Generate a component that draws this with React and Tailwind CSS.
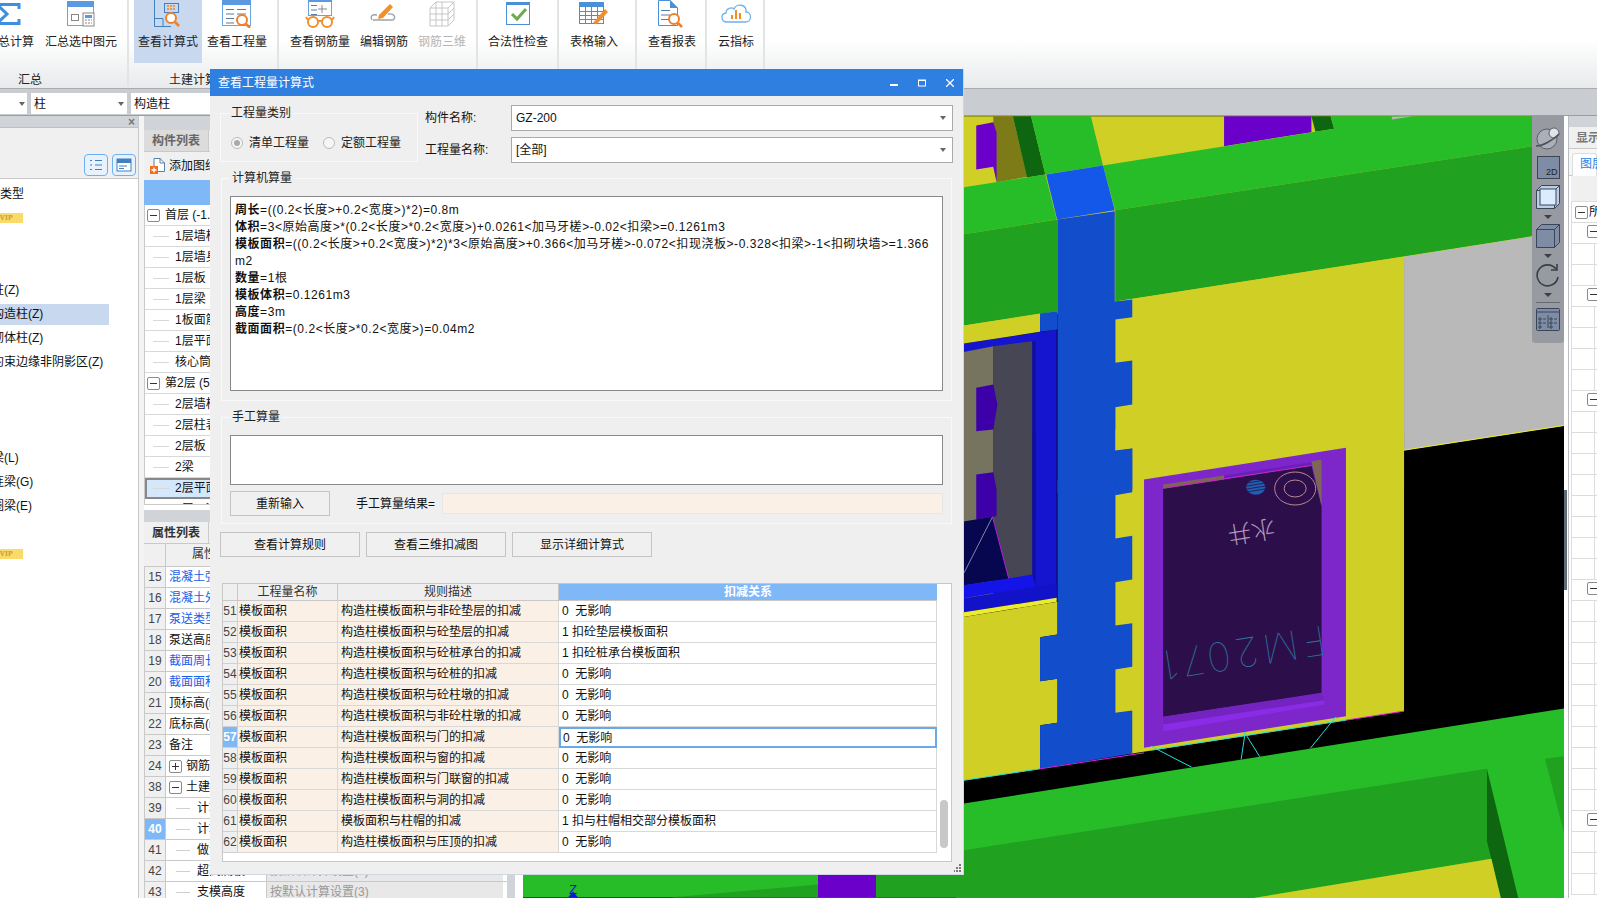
import React from 'react';

const z7 = (p) => p.map(([x, y]) => `${960 + x / 2.4615},${90 + y / 3}`).join(' ');
const z8 = (p) => p.map(([x, y]) => `${960 + x / 2.4615},${430 + y / 3}`).join(' ');
const GREEN = '#26bd28', DGREEN = '#21a120', XGREEN = '#0f6610', YEL = '#cfcf26', PUR = '#6a00c9', BLUE = '#124dcc', FRAME = '#7d26c9';

function Canvas() {
  return (
    <svg viewBox="523 117 1041 781" className="block w-full h-full bg-black">
      {/* upper */}
      <polygon points={z7([[-10, 80], [1490, 80], [1490, 440], [-10, 720]])} fill={YEL} />
      <polygon points={z7([[82, 80], [130, 80], [165, 262], [90, 278], [82, 230]])} fill="#7d7a18" />
      <polygon points={z7([[40, 108], [82, 98], [90, 130], [90, 275], [82, 232], [40, 240]])} fill={PUR} />
      <polygon points={z7([[130, 80], [175, 80], [210, 255], [165, 264]])} fill={XGREEN} />
      <polygon points={z7([[175, 80], [322, 80], [352, 228], [210, 255]])} fill={GREEN} />
      <polygon points={z7([[650, 80], [865, 80], [865, 128], [650, 170]])} fill={PUR} />
      <polygon points={z7([[865, 80], [912, 80], [921, 118], [875, 127]])} fill={XGREEN} />
      <polygon points={z7([[352, 228], [921, 118], [912, 80], [1490, 80], [1490, 155], [382, 362]])} fill={GREEN} />
      <polygon points={z7([[1063, 90], [1115, 80], [1063, 82]])} fill="#b9b9b9" />
      <polygon points={z7([[-10, 297], [210, 255], [238, 390], [-10, 438]])} fill={GREEN} />
      <polygon points={z7([[212, 255], [352, 228], [381, 362], [239, 390]])} fill="#1458ea" />
      <polygon points={z7([[-10, 438], [240, 390], [240, 665], [-10, 712]])} fill={DGREEN} />
      <polygon points={z7([[382, 362], [1490, 155], [1490, 425], [382, 636]])} fill={DGREEN} />
      {/* gray wall */}
      <polygon points={z7([[1093, 502], [1490, 425], [1490, 1008], [1093, 1082]])} fill="#b9b9b9" />
      <line x1={960 + 1093 / 2.4615} y1={90 + 1082 / 3} x2={1564} y2={90 + 1008 / 3} stroke="#f0f020" strokeWidth="1" />
      {/* yellow wall */}
      <polygon points={z7([[382, 636], [1093, 502], [1093, 1200], [382, 1200]])} fill={YEL} />
      <polygon points={z8([[382, 0], [1093, 0], [1093, 845], [424, 972], [382, 972]])} fill={YEL} />
      {/* left window */}
      <polygon points={z7([[-10, 766], [238, 720], [238, 1530], [-10, 1530]])} fill="#1515d0" />
      <polygon points={z7([[-10, 792], [82, 770], [82, 1530], [-10, 1530]])} fill="#76735f" />
      <polygon points={z7([[82, 770], [178, 755], [178, 1300], [82, 1300]])} fill="#464654" />
      <polygon points={z7([[178, 755], [186, 754], [186, 1300], [178, 1300]])} fill="#0f0f9a" />
      <polygon points={z8([[82, 0], [178, 0], [178, 435], [120, 447], [82, 262]])} fill="#464654" />
      <polygon points={z8([[178, 0], [186, 0], [186, 470], [178, 435]])} fill="#0f0f9a" />
      <polygon points={z7([[40, 895], [82, 885], [92, 945], [82, 1020], [40, 1025]])} fill="#3d00a8" />
      <polygon points={z8([[40, 135], [82, 128], [90, 180], [90, 260], [40, 270]])} fill="#3d00a8" />
      <polygon points={z8([[-10, 280], [80, 262], [120, 447], [-10, 472]])} fill="#07074f" />
      <line x1={960 + 10 / 2.4615} y1={430 + 430 / 3} x2={960 + 80 / 2.4615} y2={430 + 262 / 3} stroke="#8a80b0" strokeWidth="1" />
      <line x1={960 + 80 / 2.4615} y1={430 + 262 / 3} x2={960 + 120 / 2.4615} y2={430 + 447 / 3} stroke="#c020d0" strokeWidth="1" />
      <polygon points={z8([[-10, 470], [178, 437], [186, 470], [-10, 510]])} fill="#1414e8" />
      <polygon points={z8([[-10, 510], [186, 472], [238, 462], [238, 505], [-10, 552]])} fill="#1212c8" />
      <polygon points={z8([[-10, 552], [238, 505], [238, 517], [-10, 566]])} fill="#ecec2e" />
      <polygon points={z8([[-10, 566], [240, 517], [240, 615], [197, 623], [197, 755], [240, 748], [240, 880], [197, 887], [197, 1018], [-10, 1056]])} fill={YEL} />
      <polygon points={z7([[-10, 712], [197, 672], [197, 727], [-10, 766]])} fill={YEL} />
      {/* blue column */}
      <polygon points={z7([[240, 390], [381, 365], [381, 636], [424, 630], [424, 683], [382, 690], [382, 820], [424, 813], [424, 945], [382, 953], [382, 1083], [424, 1077], [424, 1200], [240, 1200]])} fill={BLUE} />
      <polygon points={z7([[240, 665], [197, 672], [197, 727], [240, 720]])} fill={BLUE} />
      <polygon points={z8([[240, 180], [382, 180], [382, 197], [382, 327], [424, 319], [424, 450], [382, 458], [382, 588], [424, 581], [424, 712], [382, 720], [382, 850], [424, 843], [424, 972], [197, 1018], [197, 887], [240, 880], [240, 748], [197, 755], [197, 623], [240, 615]])} fill={BLUE} />
      <polygon points={z8([[382, 65], [424, 57], [424, 188], [382, 197]])} fill={BLUE} />
      <polygon points={z8([[240, 150], [382, 150], [382, 190], [240, 190]])} fill={BLUE} />
      {/* door */}
      <polygon points={z8([[453, 150], [950, 55], [950, 860], [453, 955]])} fill={FRAME} />
      <polygon points={z8([[500, 175], [865, 108], [890, 230], [890, 790], [500, 862]])} fill="#2c0f4a" />
      <polygon points={z8([[500, 165], [650, 138], [650, 150], [500, 178]])} fill="#7d6655" />
      <polygon points={z8([[650, 138], [865, 98], [865, 108], [650, 150]])} fill="#6a1fb8" />
      <polygon points={z8([[865, 95], [890, 90], [890, 230]])} fill="#7d6655" />
      <polygon points={z8([[500, 862], [890, 792], [897, 812], [500, 885]])} fill="#7423c0" />
      <polygon points={z8([[500, 885], [897, 812], [897, 825], [500, 906]])} fill="#8a2be6" />
      <line x1={960 + 500 / 2.4615} y1={430 + 176 / 3} x2={960 + 865 / 2.4615} y2={430 + 108 / 3} stroke="#d020d0" strokeWidth="1" />
      <ellipse cx={960 + 825 / 2.4615} cy={430 + 177 / 3} rx="20.5" ry="16.5" fill="none" stroke="#b88a90" strokeWidth="1" />
      <ellipse cx={960 + 825 / 2.4615} cy={430 + 177 / 3} rx="11" ry="8.5" fill="none" stroke="#b88a90" strokeWidth="1" />
      <ellipse cx={960 + 728 / 2.4615} cy={430 + 173 / 3} rx="9.5" ry="7.5" fill="#1f5fb0" />
      {[-4, -1, 2, 5].map((d) => (
        <line key={d} x1={1247} y1={487.5 + d} x2={1265} y2={484.5 + d} stroke="#2c0f4a" strokeWidth="0.8" />
      ))}
      <text transform="translate(1251 530) rotate(171)" textAnchor="middle" dominantBaseline="middle" fontSize="24" fontFamily="'Noto Sans CJK SC', sans-serif" fill="#c9b3d0" fillOpacity="0.85" fontWeight="300">水井</text>
      <text transform="translate(1242 650) rotate(171)" textAnchor="middle" dominantBaseline="middle" fontSize="40" letterSpacing="4" fontFamily="Inter, sans-serif" fontWeight="100" fill="#2d6f9c">FM2071</text>
      {/* lines */}
      <polyline points={z8([[-10, 1056], [197, 1018]])} stroke="#20e0e0" fill="none" />
      <polyline points={z8([[197, 1018], [453, 970]])} stroke="#e020e0" fill="none" />
      <polyline points={z8([[950, 872], [1093, 845]])} stroke="#e020e0" fill="none" />
      <polyline points={z8([[470, 962], [950, 872]])} stroke="#20e0e0" fill="none" />
      <polyline points={z8([[470, 950], [570, 1013]])} stroke="#20e0e0" fill="none" />
      <polyline points={z8([[702, 908], [692, 990]])} stroke="#20e0e0" fill="none" />
      <polyline points={z8([[700, 908], [738, 982]])} stroke="#20e0e0" fill="none" />
      <polyline points={z8([[925, 862], [862, 957]])} stroke="#20e0e0" fill="none" />
      {/* lower green */}
      <polygon points={z8([[-10, 1126], [1490, 836], [1490, 1410], [-10, 1410]])} fill={GREEN} />
      <polygon points={z8([[1440, 988], [1490, 980], [1490, 1225]])} fill={DGREEN} />
      <polygon points={z8([[-10, 1266], [1297, 1018], [1297, 1235], [1308, 1288], [700, 1410], [-10, 1410]])} fill={DGREEN} />
      <polygon points={z8([[1297, 1018], [1375, 1410], [1332, 1410], [1297, 1235]])} fill={XGREEN} />
      <polygon points={z8([[700, 1410], [1308, 1288], [1332, 1410]])} fill={YEL} />
      <rect x="523" y="860" width="441" height="38" fill={GREEN} />
      <polygon points="670,898 818,885 964,851 964,898" fill={DGREEN} />
      <rect x="818" y="860" width="58" height="38" fill={PUR} />
      <text x="569" y="894" fontSize="13" fontFamily="'Liberation Sans', sans-serif" fill="#1010e0">Z</text>
      <polygon points="573,892 578,898 568,898" fill="#1010e0" />
    </svg>
  );
}

const Sm = ({ className = '', children, w = 30, h = 28 }) => (
  <svg width={w} height={h} viewBox={`0 0 ${w} ${h}`} className={`block ${className}`} fill="none">{children}</svg>
);
const Mag = ({ x, y }) => (
  <g stroke="#f0802a" fill="none" strokeWidth="2">
    <circle cx={x} cy={y} r="5" fill="#fff" />
    <line x1={x + 4} y1={y + 4} x2={x + 8} y2={y + 8} strokeWidth="2.5" />
  </g>
);
const Lines = ({ x, y, n = 4, w = 12 }) => (
  <g stroke="#5a7da5">
    {Array.from({ length: n }).map((_, i) => (
      <line key={i} x1={x} y1={y + i * 4.5 + 0.5} x2={x + w} y2={y + i * 4.5 + 0.5} />
    ))}
  </g>
);
const I = {
  sigma: <Sm><path d="M24 9 V4.5 H2 L12 14 L2 23.5 H24 V19" stroke="#3f8fe0" strokeWidth="3" /></Sm>,
  win: (
    <Sm>
      <rect x="1.5" y="2.5" width="26" height="23" fill="#fff" stroke="#69a3e0" />
      <rect x="1" y="1" width="27" height="6" fill="#5b9ae0" />
      <rect x="5.5" y="14.5" width="7" height="6" stroke="#888" />
      <rect x="17" y="13" width="11" height="13" fill="#fff" stroke="#888" />
      <rect x="19" y="15" width="7" height="3" fill="#5b9ae0" />
      <path d="M19 20h7M19 23h7" stroke="#888" strokeDasharray="2 1" />
    </Sm>
  ),
  calc: (
    <Sm>
      <path d="M1.5 0 V26.5 H18 M1.5 18.5 H10 V26.5" stroke="#3f80c0" />
      <rect x="11.5" y="3.5" width="14" height="9" stroke="#3f80c0" />
      <path d="M14 6h9M14 9h9" stroke="#f0802a" strokeWidth="1.5" strokeDasharray="2 1" />
      <Mag x={18} y={18} />
    </Sm>
  ),
  qty: (
    <Sm>
      <rect x="0.5" y="1.5" width="28" height="24" fill="#fff" stroke="#69a3e0" />
      <rect x="0" y="0" width="29" height="5" fill="#5b9ae0" />
      <Lines x={4} y={9} n={4} w={8} />
      <Lines x={15} y={9} n={2} w={9} />
      <Mag x={20} y={20} />
    </Sm>
  ),
  glasses: (
    <Sm>
      <rect x="3.5" y="0.5" width="23" height="15" fill="#fff" stroke="#69a3e0" />
      <rect x="3" y="0" width="24" height="2" fill="#5b9ae0" />
      <Lines x={6} y={5} n={3} w={6} />
      <path d="M17 5v8M13 9h9" stroke="#888" />
      <circle cx="8" cy="22" r="5" stroke="#f0902a" strokeWidth="2" />
      <circle cx="22" cy="22" r="5" stroke="#f0902a" strokeWidth="2" />
      <path d="M13 21h4M3 20l-2-3M27 20l2-3" stroke="#f0902a" strokeWidth="2" />
    </Sm>
  ),
  pen: (
    <Sm>
      <path d="M3 20 C1 16 3 14 8 15 M19 14 C26 13 27 18 24 20 H4" stroke="#9aa3ab" strokeWidth="1.3" />
      <path d="M10 15 L21 4 L24 7 L14 18 L9 19 Z" fill="#f0902a" />
    </Sm>
  ),
  bars3d: (
    <Sm>
      <g stroke="#c6c6c6">
        <path d="M3 8 L9 2 H27 V20 L21 26 H3 Z M3 8 H21 V26 M21 8 L27 2 M3 14 H21 M3 20 H21 M9 8 V26 M15 8 V26 M9 2 V8 M15 2 V8 M27 8 L21 14 M27 14 L21 20" />
      </g>
    </Sm>
  ),
  check: (
    <Sm>
      <rect x="3.5" y="3.5" width="23" height="21" fill="#fff" stroke="#4a8fd8" />
      <rect x="3" y="2" width="24" height="3" fill="#4a8fd8" />
      <path d="M9 14 L14 19 L23 9" stroke="#6fa84f" strokeWidth="3" />
    </Sm>
  ),
  table: (
    <Sm>
      <rect x="0.5" y="2.5" width="24" height="21" fill="#fff" stroke="#4a8fd8" />
      <rect x="0" y="2" width="25" height="5" fill="#4a8fd8" />
      <path d="M1 11.5h23M1 15.5h23M1 19.5h23M6.5 7v16M12.5 7v16M18.5 7v16" stroke="#4a8fd8" />
      <path d="M14 23 L26 9 L29 12 L18 24 Z" fill="#f0902a" />
    </Sm>
  ),
  report: (
    <Sm>
      <path d="M1.5 0.5 H13 L20.5 8 V25.5 H1.5 Z" fill="#fff" stroke="#4a8fd8" />
      <path d="M13 0 V8 H21 Z" fill="#4a8fd8" />
      <Lines x={4} y={10} n={3} w={9} />
      <Mag x={17} y={19} />
    </Sm>
  ),
  cloud: (
    <Sm w={34}>
      <path d="M8 22 C2 22 1 14 7 13 C7 8 13 7 15 9 C17 3 28 4 27 12 C33 12 33 22 27 22 Z" fill="#fff" stroke="#6cb2f0" strokeWidth="1.3" />
      <path d="M13 15v4M17 10v9M21 13v6" stroke="#f0902a" strokeWidth="2" />
    </Sm>
  ),
  addDoc: (
    <svg width="16" height="18" viewBox="0 0 16 18" className="block" fill="none">
      <path d="M4 1.5H10L14.5 6V14.5H4Z" fill="#fff" stroke="#5a80a5" />
      <path d="M10 1V6H15" stroke="#5a80a5" />
      <rect x="0" y="9" width="8" height="8" fill="#f07020" />
      <path d="M4 10.5v5M1.5 13h5" stroke="#fff" strokeWidth="1.3" />
    </svg>
  ),
};

const Btn = ({ icon, label, w, active, gray }) => (
  <div className={`flex flex-col items-center shrink-0 h-[63px] ${active ? 'bg-[#c7d8ef]' : ''}`} style={{ width: w }}>
    <div className="h-[30px] flex items-start justify-center">{icon}</div>
    <div className={`mt-[4px] whitespace-nowrap ${gray ? 'text-[#b5b5b5]' : 'text-[#222]'}`}>{label}</div>
  </div>
);
const Group = ({ w, label, labelMl = 0, children, pl = 0 }) => (
  <div className="shrink-0 h-[87px] border-r-2 border-[#e2e4e6] flex flex-col" style={{ width: w, paddingLeft: pl }}>
    <div className="flex h-[63px]">{children}</div>
    {label && <div className="mt-[9px] whitespace-nowrap text-[#222]" style={{ marginLeft: labelMl }}>{label}</div>}
  </div>
);

const Ribbon = () => (
  <div className="h-[89px] shrink-0 overflow-hidden bg-gradient-to-b from-white from-45% to-[#e8eaec] flex border-b border-[#a9abae]">
    <div className="flex -ml-[24px]">
      <Group w={153} label="汇总" labelMl={42}>
        <Btn icon={I.sigma} label="汇总计算" w={68} />
        <Btn icon={I.win} label="汇总选中图元" w={74} />
      </Group>
      <Group w={150} label="土建计算" labelMl={35} pl={5}>
        <Btn icon={I.calc} label="查看计算式" w={68} active />
        <Btn icon={I.qty} label="查看工程量" w={70} />
      </Group>
      <Group w={199} pl={7}>
        <Btn icon={I.glasses} label="查看钢筋量" w={68} />
        <Btn icon={I.pen} label="编辑钢筋" w={60} />
        <Btn icon={I.bars3d} label="钢筋三维" w={56} gray />
      </Group>
      <Group w={81}><Btn icon={I.check} label="合法性检查" w={80} /></Group>
      <Group w={78}><Btn icon={I.table} label="表格输入" w={70} /></Group>
      <Group w={70}><Btn icon={I.report} label="查看报表" w={70} /></Group>
      <Group w={58}><Btn icon={I.cloud} label="云指标" w={58} /></Group>
    </div>
  </div>
);

const Caret = () => <span className="w-0 h-0 border-x-[3.5px] border-x-transparent border-t-[4px] border-t-[#666]" />;

const Toolbar = () => (
  <div className="h-[27px] shrink-0 bg-[#c9ccd1] border-b border-[#9a9c9f] flex gap-[4px] pt-[4px] pb-[1px]">
    <div className="w-[27px] bg-white flex items-center justify-end pr-[2px]"><Caret /></div>
    <div className="w-[96px] bg-white flex items-center justify-between pl-[3px] pr-[3px] leading-none"><span>柱</span><Caret /></div>
    <div className="w-[100px] bg-white flex items-center pl-[3px] leading-none"><span>构造柱</span></div>
  </div>
);

const leftRows = [
  ['类型', 0], [null, 'vip'], [], [], ['柱(Z)'], ['构造柱(Z)', 1], ['砌体柱(Z)'], ['约束边缘非阴影区(Z)'], [], [], [], ['梁(L)'], ['连梁(G)'], ['圈梁(E)'], [], [null, 'vip'],
];

const LeftPanel = () => (
  <div className="w-[139px] shrink-0 h-full bg-white border-r border-[#c6c8cb] flex flex-col overflow-hidden">
    <div className="h-[12px] bg-[#d0d3d8] border-b border-[#bdbfc2] flex items-center justify-end pr-[3px]">
      <span className="text-[#777] text-[12px] leading-none font-bold">×</span>
    </div>
    <div className="h-[51px] bg-[#f0f0f0] border-b border-[#c9c9c9] flex justify-end items-start gap-[4px] pt-[26px] pr-[2px]">
      <div className="w-[24px] h-[22px] rounded-[4px] border border-[#6cb2f0] bg-[#e8f2fc] flex items-center justify-center">
        <svg width="14" height="14" viewBox="0 0 14 14" fill="none" stroke="#3f80c0"><path d="M1 2.5h2M6 2.5h7M1 7h2M6 7h7M1 11.5h2M6 11.5h7" /></svg>
      </div>
      <div className="w-[24px] h-[22px] rounded-[4px] border border-[#6cb2f0] bg-[#e8f2fc] flex items-center justify-center">
        <svg width="16" height="14" viewBox="0 0 16 14" fill="none"><rect x="1" y="1" width="14" height="12" fill="#fff" stroke="#3f80c0" /><rect x="1" y="1" width="14" height="4" fill="#3f80c0" /><path d="M3 8h8M3 10.5h5" stroke="#3f80c0" /></svg>
      </div>
    </div>
    <div className="pt-[3px]">
      {leftRows.map((r, i) => (
        <div key={i} className="h-[24px] flex items-center">
          {r[1] === 'vip' ? (
            <span className="w-[23px] h-[10px] bg-[#fadb6a] text-[#c9a030] text-[8px] leading-[10px] font-bold font-serif">VIP</span>
          ) : r[0] ? (
            <span className={`h-[21px] flex items-center whitespace-nowrap overflow-visible ${r[1] === 1 ? 'bg-[#c7d8ef] w-[109px]' : ''}`}>
              <span className={r[1] === 0 ? '' : '-ml-[8px]'}>{r[0]}</span>
            </span>
          ) : null}
        </div>
      ))}
    </div>
  </div>
);

const TreeToggle = ({ minus }) => (
  <span className="relative inline-block w-[13px] h-[13px] border border-[#8a8a8a] rounded-[2px] bg-white shrink-0">
    <span className="absolute left-[2px] right-[2px] top-[5px] h-px bg-[#333]" />
    {!minus && <span className="absolute top-[2px] bottom-[2px] left-[5px] w-px bg-[#333]" />}
  </span>
);

const tree = [
  ['首层 (-1.100,2.900)', 0], ['1层墙柱', 1], ['1层墙身', 1], ['1层板', 1], ['1层梁', 1], ['1板面筋', 1], ['1层平面', 1], ['核心筒', 1],
  ['第2层 (5.900,8.900)', 0], ['2层墙柱', 1], ['2层柱表', 1], ['2层板', 1], ['2梁', 1], ['2层平面', 1, true], ['2层二次', 1],
];

const props = [
  ['15', '混凝土强度等级', 'b'], ['16', '混凝土外加剂', 'b'], ['17', '泵送类型', 'b'], ['18', '泵送高度(m)'], ['19', '截面周长(m)', 'b'], ['20', '截面面积(m²)', 'b'],
  ['21', '顶标高(m)'], ['22', '底标高(m)'], ['23', '备注'], ['24', '钢筋业务属性', 'p'], ['38', '土建业务属性', 'm'], ['39', '计算设置', 't'], ['40', '计算规则', 't', 's'], ['41', '做法信息', 't'], ['42', '超高底板', 't', null, '按默认计算设置(3)'], ['43', '支模高度', 't', null, '按默认计算设置(3)'],
];

const MidPanel = () => (
  <div className="w-[363px] shrink-0 h-full flex flex-col overflow-hidden bg-white">
    <div className="h-[14px] shrink-0 bg-[#d0d3d8]" />
    <div className="h-[22px] shrink-0 bg-[#f0f0f0] border-b border-[#c9c9c9] flex">
      <div className="w-[65px] bg-[#dcdcdc] border-r border-[#c9c9c9] flex items-center justify-center text-[#666] font-bold">构件列表</div>
    </div>
    <div className="h-[28px] shrink-0 bg-[#f0f0f0] flex items-center gap-[3px] pl-[6px]">{I.addDoc}<span>添加图纸</span></div>
    <div className="h-[25px] shrink-0 bg-[#7fb8f7]" />
    <div className="h-[300px] shrink-0 overflow-hidden border-l border-[#c9c9c9] border-b">
      {tree.map(([t, lvl, sel], i) => (
        <div key={i} className={`h-[21px] flex items-center border-b border-[#d8d8d8] whitespace-nowrap ${sel ? 'bg-[#d5e8fb] outline-2 -outline-offset-2 outline-[#888]' : ''}`}>
          {lvl === 0 ? (
            <span className="flex items-center pl-[2px] gap-[5px]"><TreeToggle minus /><span>{t}</span></span>
          ) : (
            <span className="flex items-center pl-[8px] gap-[6px]"><span className="w-[16px] h-px bg-[#d8d8d8]" /><span>{t}</span></span>
          )}
        </div>
      ))}
    </div>
    <div className="h-[5px] shrink-0 bg-white" />
    <div className="h-[12px] shrink-0 bg-[#d0d3d8]" />
    <div className="h-[22px] shrink-0 bg-[#f0f0f0] border-b border-[#c9c9c9] flex">
      <div className="w-[65px] bg-[#f0f0f0] border-r border-[#c9c9c9] flex items-center justify-center text-[#333] font-bold">属性列表</div>
    </div>
    <div className="h-[23px] shrink-0 grid grid-cols-[22px_101px_236px] bg-[#f0f0f0] border-b border-[#c9c9c9]">
      <div className="border-r border-[#c9c9c9]" />
      <div className="text-center leading-[21px] text-[#333] border-r border-[#c9c9c9]">属性名称</div>
      <div className="text-center leading-[21px] text-[#333]">属性值</div>
    </div>
    {props.map(([n, name, k, s, v], i) => (
      <div key={i} className="h-[21px] shrink-0 grid grid-cols-[22px_101px_236px] border-b border-[#c9c9c9] whitespace-nowrap">
        <div className={`border-r border-l border-[#c9c9c9] flex items-center justify-center ${s ? 'bg-[#7fb8f7] text-white font-bold' : 'bg-[#f0f0f0] text-[#444]'}`}>{n}</div>
        <div className={`border-r border-[#c9c9c9] flex items-center overflow-hidden ${k === 'b' ? 'text-[#1560e8]' : ''}`}>
          {k === 'p' || k === 'm' ? (
            <span className="flex items-center pl-[3px] gap-[4px]"><TreeToggle minus={k === 'm'} /><span>{name}</span></span>
          ) : k === 't' ? (
            <span className="flex items-center pl-[10px] gap-[7px]"><span className="w-[14px] h-px bg-[#d0d0d0]" /><span>{name}</span></span>
          ) : (
            <span className="pl-[3px]">{name}</span>
          )}
        </div>
        <div className={`flex items-center pl-[3px] ${v ? 'bg-[#e8e8e8] text-[#999]' : ''}`}>{v}</div>
      </div>
    ))}
  </div>
);

const IconBox = ({ children }) => <svg width="24" height="24" viewBox="0 0 24 24" className="block" fill="none">{children}</svg>;
const DownTri = () => (
  <div className="h-[15px] flex items-center justify-center">
    <span className="w-0 h-0 border-x-[4px] border-x-transparent border-t-[4px] border-t-[#3a3f48]" />
  </div>
);
const CubeIcon = ({ fill, face }) => (
  <IconBox>
    <path d="M0.5 5.5 L5.5 0.5 H23.5 V18.5 L18.5 23.5 H0.5 Z" fill={fill} stroke="#3a4658" />
    <path d="M0.5 5.5 H18.5 V23.5 M18.5 5.5 L23.5 0.5" stroke="#3a4658" />
    {face && <rect x="4" y="4" width="16" height="16" fill="#dcecff" stroke="#3a4658" />}
  </IconBox>
);

const ViewBar = () => (
  <div className="absolute top-0 right-0 w-[32px] h-[227px] bg-[#979aa0] rounded-b-[3px] flex flex-col items-center pt-[10px]">
    <svg width="26" height="24" viewBox="0 0 26 24" className="block" fill="none">
      <circle cx="12" cy="13" r="10" fill="#aab0ba" stroke="#5a6068" />
      <circle cx="19" cy="7" r="5" fill="#e0e3e8" stroke="#5a6068" />
      <path d="M1 20 C8 20 18 14 24 8" stroke="#4a5058" strokeWidth="1.5" />
    </svg>
    <div className="mt-[6px] w-[23px] h-[23px] bg-[#7e8da5] border border-[#3a4658] flex items-end justify-end pr-[1px] text-[9px] leading-[11px] text-[#222]">2D</div>
    <div className="mt-[6px]"><CubeIcon fill="#b9cfe8" face /></div>
    <DownTri />
    <CubeIcon fill="#7e8da5" />
    <DownTri />
    <svg width="24" height="24" viewBox="0 0 24 24" className="block" fill="none" stroke="#3a3f48" strokeWidth="1.6">
      <path d="M20 6 A10.5 10.5 0 1 0 22 14" /><path d="M21 1 V7 H15" />
    </svg>
    <DownTri />
    <div className="w-[24px] h-px bg-[#666a70]" />
    <svg width="24" height="24" viewBox="0 0 24 24" className="block mt-[4px]" fill="#7e8da5" stroke="#3a4658">
      <rect x="0.5" y="1.5" width="23" height="22" rx="1" />
      <path d="M0.5 5h23M12 8v13" />
      <path d="M3 11h2v2H3zM7 12h3M3 15h2v2H3zM7 16h3M3 19h2v2H3zM14 11h2v2h-2zM18 12h3M14 15h2v2h-2zM18 16h3M14 19h2v2h-2z" fill="none" />
    </svg>
  </div>
);

const rightRows = Array.from({ length: 33 });
const rightToggles = { 0: 0, 1: 1, 4: 1, 9: 1, 18: 1, 29: 1 };

const RightPanel = () => (
  <div className="flex-1 h-full bg-white border-l border-[#b9bcc0] overflow-hidden flex flex-col">
    <div className="h-[11px] shrink-0 bg-[#d0d3d8]" />
    <div className="h-[22px] shrink-0 bg-[#f0f0f0] border-b border-[#c9c9c9] pl-[7px] leading-[22px] font-bold text-[#777] whitespace-nowrap">显示设置</div>
    <div className="h-[27px] shrink-0 pt-[4px] pl-[3px] bg-[#f6f6f6] border-b border-[#c9c9c9]">
      <div className="h-[23px] bg-white border border-b-0 border-[#ddd] rounded-t-[3px] pl-[7px] leading-[21px] text-[#1e7fe8] whitespace-nowrap">图层</div>
    </div>
    <div className="h-[26px] shrink-0 bg-[#f0f0f0] ml-[2px] border-b border-[#ddd]" />
    {rightRows.map((_, i) => {
      const t = rightToggles[i];
      return (
        <div key={i} className="h-[21px] shrink-0 ml-[2px] border-b border-l border-[#dcdcdc] flex items-center relative">
          {t === 0 && <span className="ml-[3px] flex items-center gap-[1px]"><TreeToggle minus /><span className="whitespace-nowrap">所有</span></span>}
          {t === 1 && <span className="ml-[15px]"><TreeToggle minus /></span>}
          {t === undefined && <span className="ml-[22px] w-px h-full bg-[#dcdcdc]" />}
        </div>
      );
    })}
  </div>
);

const rows = [
  ['51', '构造柱模板面积与非砼垫层的扣减', '0  无影响'],
  ['52', '构造柱模板面积与砼垫层的扣减', '1 扣砼垫层模板面积'],
  ['53', '构造柱模板面积与砼桩承台的扣减', '1 扣砼桩承台模板面积'],
  ['54', '构造柱模板面积与砼桩的扣减', '0  无影响'],
  ['55', '构造柱模板面积与砼柱墩的扣减', '0  无影响'],
  ['56', '构造柱模板面积与非砼柱墩的扣减', '0  无影响'],
  ['57', '构造柱模板面积与门的扣减', '0  无影响'],
  ['58', '构造柱模板面积与窗的扣减', '0  无影响'],
  ['59', '构造柱模板面积与门联窗的扣减', '0  无影响'],
  ['60', '构造柱模板面积与洞的扣减', '0  无影响'],
  ['61', '模板面积与柱帽的扣减', '1 扣与柱帽相交部分模板面积'],
  ['62', '构造柱模板面积与压顶的扣减', '0  无影响'],
];

const calcLines = [
  ['周长', '=((0.2<长度>+0.2<宽度>)*2)=0.8m'],
  ['体积', '=3<原始高度>*(0.2<长度>*0.2<宽度>)+0.0261<加马牙槎>-0.02<扣梁>=0.1261m3'],
  ['模板面积', '=((0.2<长度>+0.2<宽度>)*2)*3<原始高度>+0.366<加马牙槎>-0.072<扣现浇板>-0.328<扣梁>-1<扣砌块墙>=1.366'],
  ['', 'm2'],
  ['数量', '=1根'],
  ['模板体积', '=0.1261m3'],
  ['高度', '=3m'],
  ['截面面积', '=(0.2<长度>*0.2<宽度>)=0.04m2'],
];

const DialogBtn = ({ children, w }) => (
  <div className={`h-[25px] ${w} bg-[#f0f0f0] border border-[#c4c4c4] flex items-center justify-center`}>{children}</div>
);

const Radio = ({ on, children }) => (
  <div className="flex items-center gap-[6px] text-[#222]">
    <span className="w-[12px] h-[12px] rounded-full border border-[#bbb] bg-[#f6f6f6] flex items-center justify-center">
      {on && <span className="w-[6px] h-[6px] rounded-full bg-[#aaa]" />}
    </span>
    {children}
  </div>
);

const DSelect = ({ v }) => (
  <div className="w-[442px] h-[26px] bg-white border border-[#aaa] flex items-center justify-between pl-[4px] pr-[6px]">
    <span>{v}</span><Caret />
  </div>
);

const Legend = ({ children, ml = 'ml-[8px]' }) => <legend className={`${ml} px-[2px] leading-[16px] text-[#222]`}>{children}</legend>;

const Dialog = () => (
  <div className="absolute left-[210px] top-[69px] w-[754px] h-[806px] bg-[#efefef] border-r border-b border-[#cfd6e0] flex flex-col z-10">
    <div className="h-[27px] shrink-0 bg-[#2f7fe0] flex items-center justify-between pl-[8px] pr-[9px] text-white text-[12px]">
      <span>查看工程量计算式</span>
      <div className="flex items-center gap-[20px]">
        <svg width="8" height="8" viewBox="0 0 8 8"><rect x="0" y="5" width="8" height="2" fill="#fff" /></svg>
        <svg width="8" height="8" viewBox="0 0 8 8" fill="none" stroke="#fff"><rect x="0.5" y="1" width="7" height="6" /><path d="M0 1.5h8" /></svg>
        <svg width="8" height="8" viewBox="0 0 8 8" stroke="#fff" strokeWidth="1.3"><path d="M0 0L8 8M8 0L0 8" /></svg>
      </div>
    </div>
    <div className="flex-1 px-[10px] relative min-h-0">
      <div className="flex pt-[9px] h-[66px]">
        <fieldset className="w-[199px] h-[57px] border border-[#f9f9f9]">
          <Legend>工程量类别</Legend>
          <div className="flex gap-[14px] pl-[10px] pt-[14px]">
            <Radio on>清单工程量</Radio>
            <Radio>定额工程量</Radio>
          </div>
        </fieldset>
        <div className="ml-[7px] flex flex-col gap-[6px]">
          <div className="flex items-center"><span className="w-[86px]">构件名称:</span><DSelect v="GZ-200" /></div>
          <div className="flex items-center"><span className="w-[86px]">工程量名称:</span><DSelect v="[全部]" /></div>
        </div>
      </div>
      <fieldset className="mx-[1px] mt-[8px] h-[231px] border border-[#f9f9f9] px-[8px]">
        <Legend ml="ml-0">计算机算量</Legend>
        <div className="mt-[10px] h-[195px] bg-white border border-[#888] pl-[4px] pt-[5px] text-[#111] tracking-[0.55px]">
          {calcLines.map(([b, t], i) => (
            <div key={i} className="h-[17px] leading-[17px] whitespace-nowrap"><b>{b}</b>{t}</div>
          ))}
        </div>
      </fieldset>
      <fieldset className="mx-[1px] mt-[8px] h-[115px] border border-[#f9f9f9] px-[8px]">
        <Legend ml="ml-0">手工算量</Legend>
        <div className="mt-[10px] h-[50px] bg-white border border-[#888]" />
        <div className="mt-[6px] flex items-center">
          <DialogBtn w="w-[100px]">重新输入</DialogBtn>
          <span className="ml-[26px] w-[86px]">手工算量结果=</span>
          <div className="h-[21px] w-[501px] bg-[#faf0e6] border border-[#e6e6e6]" />
        </div>
      </fieldset>
      <div className="flex gap-[6px] mt-[8px]">
        <DialogBtn w="w-[140px]">查看计算规则</DialogBtn>
        <DialogBtn w="w-[140px]">查看三维扣减图</DialogBtn>
        <DialogBtn w="w-[140px]">显示详细计算式</DialogBtn>
      </div>
      <div className="ml-[2px] mt-[26px] w-[730px] h-[279px] bg-white border border-[#c8c8c8] flex overflow-hidden">
        <div className="w-[714px] shrink-0">
          <div className="grid grid-cols-[15px_100px_221px_378px] h-[17px] bg-[#efefef] text-[#333] leading-[16px] text-center border-b border-[#c8c8c8]">
            <div className="border-r border-[#c8c8c8]" />
            <div className="border-r border-[#c8c8c8]">工程量名称</div>
            <div className="border-r border-[#c8c8c8]">规则描述</div>
            <div className="bg-[#7fb8f7] text-white font-bold">扣减关系</div>
          </div>
          {rows.map(([n, d, r]) => {
            const s = n === '57';
            return (
              <div key={n} className="grid grid-cols-[15px_100px_221px_378px] h-[21px] whitespace-pre">
                <div className={`flex items-center justify-center border-r border-b border-[#d0d0d0] ${s ? 'bg-[#7fb8f7] text-white font-bold' : 'bg-[#efefef] text-[#444]'}`}>{n}</div>
                <div className="bg-[#faf0e6] flex items-center pl-[1px] border-r border-b border-[#d8d8d8]">模板面积</div>
                <div className="bg-[#faf0e6] flex items-center pl-[3px] border-r border-b border-[#d8d8d8]">{d}</div>
                <div className={`flex items-center ${s ? 'border-2 border-[#6aa9e8] pl-[2px]' : 'pl-[3px] border-b border-r border-[#d8d8d8]'}`}>{r}</div>
              </div>
            );
          })}
        </div>
        <div className="flex-1 pl-[3px] pt-[216px]">
          <div className="w-[8px] h-[48px] rounded-[4px] bg-[#c8c8c8]" />
        </div>
      </div>
      <svg width="8" height="8" viewBox="0 0 8 8" fill="#777" className="absolute right-[1px] bottom-[2px]">
        <rect x="5" y="0" width="2" height="2" /><rect x="2" y="3" width="2" height="2" /><rect x="5" y="3" width="2" height="2" /><rect x="-1" y="6" width="2" height="2" /><rect x="2" y="6" width="2" height="2" /><rect x="5" y="6" width="2" height="2" />
      </svg>
    </div>
  </div>
);

export default function App() {
  return (
    <div className="relative w-[1597px] h-[898px] overflow-hidden flex flex-col bg-white text-[12px] leading-[16px] text-[#111] [font-family:'Liberation_Sans','Noto_Sans_CJK_SC',sans-serif]">
      <Ribbon />
      <Toolbar />
      <div className="flex-1 min-h-0 flex">
        <LeftPanel />
        <div className="w-[5px] shrink-0 bg-[#f4f4f4]" />
        <MidPanel />
        <div className="w-[8px] shrink-0 bg-[#d0d3d8]" />
        <div className="w-[8px] shrink-0 bg-white" />
        <div className="w-[1041px] shrink-0 h-full relative">
          <Canvas />
          <ViewBar />
        </div>
        <div className="w-[4px] shrink-0 h-full bg-white flex flex-col pt-[374px]">
          <div className="h-[100px] w-[3px] bg-[#5f6b75]" />
        </div>
        <RightPanel />
      </div>
      <Dialog />
    </div>
  );
}
